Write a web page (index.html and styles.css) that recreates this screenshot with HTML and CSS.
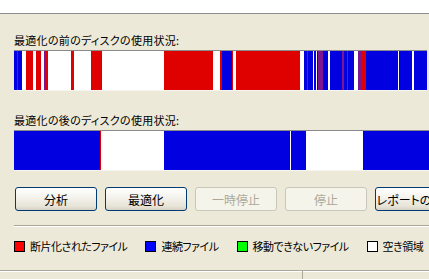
FILE: index.html
```html
<html>
<head>
  <meta charset="utf-8">
  <link rel="stylesheet" href="styles.css">
</head>
<body>
  <div class="window">
    <div class="topbar"></div>
    <div class="panel">
      <div class="caption">最適化の前のディスクの使用状況:</div>
      <div class="bar before">
        <i class="b" style="width:3px"></i><i class="p" style="width:1px"></i><i class="b" style="width:4px"></i>
        <i class="w" style="width:4px"></i><i class="r" style="width:7px"></i><i class="w" style="width:3px"></i>
        <i class="r" style="width:5px"></i><i class="w" style="width:3px"></i><i class="p" style="width:1px"></i>
        <i class="r" style="width:3px"></i><i class="w" style="width:23px"></i><i class="r" style="width:3px"></i>
        <i class="w" style="width:17px"></i><i class="r" style="width:10px"></i><i class="p" style="width:1px"></i>
        <i class="w" style="width:62px"></i><i class="r" style="width:49px"></i><i class="w" style="width:7px"></i>
        <i class="r" style="width:2px"></i><i class="b" style="width:10px"></i><i class="r" style="width:1px"></i>
        <i class="w" style="width:3px"></i><i class="r" style="width:64px"></i><i class="w" style="width:4px"></i>
        <i class="b" style="width:3px"></i><i class="p" style="width:1px"></i><i class="b" style="width:5px"></i>
        <i class="w" style="width:1px"></i><i class="b" style="width:2px"></i><i class="w" style="width:1px"></i>
        <i class="b" style="width:1px"></i><i class="p" style="width:5px"></i><i class="b" style="width:5px"></i>
        <i class="w" style="width:2px"></i><i class="b" style="width:12px"></i><i class="p" style="width:2px"></i>
        <i class="b" style="width:3px"></i><i class="p" style="width:1px"></i><i class="b" style="width:6px"></i>
        <i class="w" style="width:4px"></i><i class="p" style="width:3px"></i><i class="r" style="width:5px"></i>
        <i class="b" style="width:32px"></i><i class="w" style="width:1px"></i><i class="b" style="width:13px"></i>
        <i class="w" style="width:2px"></i><i class="b" style="width:13px"></i>
      </div>
      <div class="caption second">最適化の後のディスクの使用状況:</div>
      <div class="bar after">
        <i class="b" style="width:86px"></i><i class="r" style="width:1px"></i><i class="w" style="width:63px"></i>
        <i class="b" style="width:126px"></i><i class="w" style="width:1px"></i><i class="b" style="width:15px"></i>
        <i class="w" style="width:57px"></i><i class="b rest"></i>
      </div>
      <div class="buttons">
        <button class="btn">分析</button>
        <button class="btn">最適化</button>
        <button class="btn" disabled>一時停止</button>
        <button class="btn" disabled>停止</button>
        <button class="btn">レポートの表示</button>
      </div>
      <div class="separator"></div>
      <div class="legend">
        <span class="key"><span class="swatch red"></span>断片化されたファイル</span>
        <span class="key"><span class="swatch blue"></span>連続ファイル</span>
        <span class="key"><span class="swatch green"></span>移動できないファイル</span>
        <span class="key"><span class="swatch white"></span>空き領域</span>
      </div>
    </div>
    <div class="statusbar">
      <div class="pane first"></div>
      <div class="pane"></div>
    </div>
  </div>
</body>
</html>
```

FILE: styles.css
```css
body {
  margin: 0;
  overflow: hidden;
  font-family: "Noto Sans CJK JP", "Noto Sans", sans-serif;
  font-size: 11px;
  font-feature-settings: "palt";
  color: #000000;
}
.window {
  width: 560px;
  height: 279px;
  background: #ece9d8;
  display: flex;
  flex-direction: column;
}
.topbar {
  height: 13px;
  background: #ffffff;
  border-bottom: 1px solid #8d8d8d;
}
.panel {
  padding-left: 14px;
  flex: 1 1 auto;
}
.caption {
  margin-top: 19px;
  height: 17px;
  line-height: 15px;
  letter-spacing: 0.3px;
}
.caption.second {
  margin-top: 22px;
}
.bar {
  display: flex;
  height: 39px;
  border-top: 1px solid #8a8a8a;
  border-bottom: 1px solid #f6f5ef;
}
.bar.before {
  width: 413px;
}
.bar i {
  flex: none;
  display: block;
}
.bar i.rest {
  flex: 1 1 auto;
}
.r { background: #df0000; }
.b { background: #0000e0; }
.w { background: #ffffff; }
.p { background: #7c1690; }
.buttons {
  margin-top: 16px;
  display: flex;
  gap: 8px;
  padding-left: 1px;
}
.btn {
  flex: none;
  width: 82px;
  height: 24px;
  padding: 0;
  font-family: inherit;
  font-size: 12px;
  font-feature-settings: "palt";
  color: #000000;
  border: 1px solid #003c74;
  border-radius: 3px;
  background: linear-gradient(#ffffff, #f3f2ec 45%, #e6e3d6 85%, #d6d0c5);
  white-space: nowrap;
}
.btn:disabled {
  color: #aca899;
  border-color: #c9c7ba;
  background: #f5f4ea;
}
.separator {
  margin-top: 14px;
  height: 1px;
  background: #aca899;
  border-bottom: 1px solid #ffffff;
}
.legend {
  margin-top: 11px;
  height: 16px;
  display: flex;
  align-items: center;
  gap: 18px;
  letter-spacing: -0.5px;
}
.key {
  display: flex;
  align-items: center;
  gap: 5px;
  white-space: nowrap;
}
.swatch {
  width: 9px;
  height: 9px;
  border: 1px solid #000000;
}
.swatch.red { background: #ff0000; }
.swatch.blue { background: #0000ff; }
.swatch.green { background: #00ff00; }
.swatch.white { background: #ffffff; }
.statusbar {
  height: 8px;
  border-top: 1px solid #aca899;
  box-shadow: inset 0 1px 0 #ffffff;
  display: flex;
  background: #ece9d8;
}
.pane.first {
  width: 302px;
  border-right: 1px solid #aca899;
}
```
